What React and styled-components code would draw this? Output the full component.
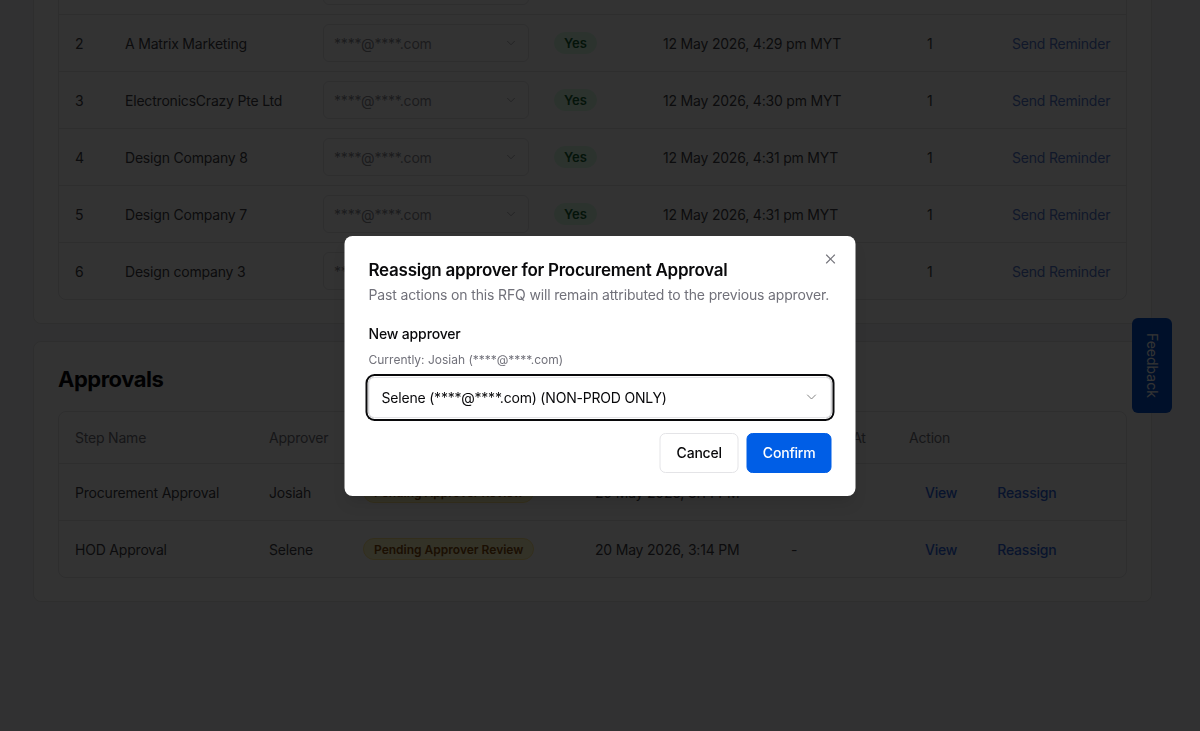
import React from "react"
import styled, { createGlobalStyle } from "styled-components"
import { ChevronDown, X } from "lucide-react"

const GlobalStyle = createGlobalStyle`
  * { box-sizing: border-box; }
  body {
    margin: 0;
    background: #f6f6f7;
    font-family: Inter, "Noto Sans", sans-serif;
    color: #09090b;
    -webkit-font-smoothing: antialiased;
  }
`

// page is scrolled down: the first card starts above the window
const Page = styled.main`
  display: flex;
  flex-direction: column;
  gap: 17px;
  width: 1152px;
  margin-top: -165px;
  padding: 0 0 120px 33px;
`

const Card = styled.section`
  background: #ffffff;
  border: 1px solid #e4e4e7;
  border-radius: 8px;
  padding: 21px 24px 23px;
`

const CardTitle = styled.h2`
  margin: 0 0 16px;
  font-size: 22px;
  line-height: 32px;
  font-weight: 700;
  letter-spacing: -0.5px;
  color: #09090b;
`

const Table = styled.div`
  border: 1px solid #e4e4e7;
  border-radius: 8px;
  overflow: hidden;
`

const Row = styled.div`
  display: grid;
  grid-template-columns: ${p => p.$cols};
  align-items: center;
  height: ${p => (p.$head ? 52 : 57)}px;
  border-bottom: 1px solid #e4e4e7;
  font-size: 14px;
  letter-spacing: -0.2px;
  color: ${p => (p.$head ? "#71717a" : "#3f3f46")};

  &:last-child {
    border-bottom: none;
    height: ${p => (p.$head ? 52 : 56)}px;
  }
`

const Cell = styled.div`
  padding-left: 16px;
  white-space: nowrap;
  display: flex;
  align-items: center;
  gap: 8px;
`

const EmailSelect = styled.div`
  width: 206px;
  height: 38px;
  border: 1px solid #e4e4e7;
  border-radius: 6px;
  display: flex;
  align-items: center;
  justify-content: space-between;
  padding: 0 10px 0 10px;
  color: #8a8a93;
  font-size: 14px;

  svg { color: #a1a1aa; }
`

const Badge = styled.span`
  display: inline-flex;
  align-items: center;
  height: 22px;
  padding: 0 ${p => (p.$tone === "green" ? 9 : 10)}px;
  border-radius: 999px;
  font-weight: 600;
  letter-spacing: 0;
  font-size: ${p => (p.$tone === "green" ? 13 : 12)}px;
  background: ${p => (p.$tone === "green" ? "#dcfce7" : "#fef9c3")};
  color: ${p => (p.$tone === "green" ? "#166534" : "#854d0e")};
  border: 1px solid ${p => (p.$tone === "green" ? "#dcfce7" : "#fde68a")};
`

const LinkText = styled.span`
  color: ${p => (p.$muted ? "#5479cf" : "#2f66de")};
  font-size: 14px;
  font-weight: ${p => (p.$muted ? 400 : 500)};
`

const LinkButton = styled(LinkText)`
  padding: 0 16px;
`

const Feedback = styled.button`
  position: fixed;
  right: 28px;
  top: 318px;
  width: 40px;
  height: 95px;
  border: none;
  border-radius: 6px;
  background: #0050d2;
  color: #ffffff;
  font-family: inherit;
  font-size: 14px;
  writing-mode: vertical-rl;
  display: flex;
  align-items: center;
  justify-content: center;
  padding: 0;
`

const Overlay = styled.div`
  position: fixed;
  inset: 0;
  background: rgba(0, 0, 0, 0.8);
`

const Dialog = styled.div`
  position: fixed;
  left: 50%;
  top: 50%;
  transform: translate(-50%, -50%);
  width: 511px;
  background: #ffffff;
  border-radius: 8px;
  padding: 24px 24px 23px;
  box-shadow: 0 10px 15px -3px rgba(0,0,0,0.1), 0 4px 6px -4px rgba(0,0,0,0.1);
`

const Close = styled.button`
  position: absolute;
  right: 17px;
  top: 15px;
  border: none;
  background: none;
  padding: 0;
  display: flex;
  color: #52525b;
  opacity: 0.8;
`

const DialogTitle = styled.h3`
  margin: 0;
  font-size: 17px;
  line-height: 20px;
  font-weight: 600;
  letter-spacing: -0.25px;
  color: #09090b;
`

const DialogText = styled.p`
  margin: 5px 0 0;
  font-size: 14px;
  line-height: 20px;
  letter-spacing: -0.15px;
  white-space: nowrap;
  color: #71717a;
`

const Field = styled.div`
  margin-top: 19px;
  display: flex;
  flex-direction: column;
`

const Label = styled.label`
  font-size: 14px;
  line-height: 20px;
  font-weight: 500;
  letter-spacing: -0.15px;
  color: #09090b;
`

const Hint = styled.span`
  margin-top: 8px;
  font-size: 12px;
  line-height: 16px;
  color: #71717a;
`

const Select = styled.div`
  margin-top: 9px;
  height: 41px;
  border: 1px solid #e4e4e7;
  border-radius: 6px;
  box-shadow: 0 0 0 1px #ffffff, 0 0 0 3px #09090b;
  display: flex;
  align-items: center;
  justify-content: space-between;
  padding: 0 11px 0 12px;
  font-size: 14px;
  letter-spacing: -0.2px;
  color: #09090b;

  svg { color: #09090b; opacity: 0.5; }
`

const Footer = styled.div`
  margin-top: 15px;
  display: flex;
  justify-content: flex-end;
  gap: 8px;
`

const Button = styled.button`
  height: 40px;
  padding: 0 ${p => (p.$primary ? 15 : 16)}px;
  border-radius: 6px;
  font-family: inherit;
  font-size: 14px;
  font-weight: 500;
  letter-spacing: -0.2px;
  border: 1px solid ${p => (p.$primary ? "#005ee6" : "#e4e4e7")};
  background: ${p => (p.$primary ? "#005ee6" : "#ffffff")};
  color: ${p => (p.$primary ? "#ffffff" : "#09090b")};
`

const supplierCols = "50px 198px 231px 109px 264px 85px 1fr"
const approvalCols = "194px 94px 232px 196px 118px 1fr"

const suppliers = [
  ["1", "Design Company 9", "4:28 pm"],
  ["2", "A Matrix Marketing", "4:29 pm"],
  ["3", "ElectronicsCrazy Pte Ltd", "4:30 pm"],
  ["4", "Design Company 8", "4:31 pm"],
  ["5", "Design Company 7", "4:31 pm"],
  ["6", "Design company 3", "4:32 pm"],
]

const approvals = [
  ["Procurement Approval", "Josiah"],
  ["HOD Approval", "Selene"],
]

export default function App() {
  return (
    <>
      <GlobalStyle />
      <Page>
        <Card>
          <CardTitle>Suppliers</CardTitle>
          <Table>
            <Row $head $cols={supplierCols}>
              <Cell>#</Cell>
              <Cell>Supplier</Cell>
              <Cell>Email</Cell>
              <Cell>Viewed</Cell>
              <Cell>Last Viewed</Cell>
              <Cell>Views</Cell>
              <Cell>Action</Cell>
            </Row>
            {suppliers.map(([no, name, time]) => (
              <Row key={no} $cols={supplierCols}>
                <Cell>{no}</Cell>
                <Cell>{name}</Cell>
                <Cell>
                  <EmailSelect>
                    ****@****.com
                    <ChevronDown size={14} strokeWidth={1.5} />
                  </EmailSelect>
                </Cell>
                <Cell><Badge $tone="green">Yes</Badge></Cell>
                <Cell>12 May 2026, {time} MYT</Cell>
                <Cell>1</Cell>
                <Cell><LinkText $muted>Send Reminder</LinkText></Cell>
              </Row>
            ))}
          </Table>
        </Card>

        <Card>
          <CardTitle>Approvals</CardTitle>
          <Table>
            <Row $head $cols={approvalCols}>
              <Cell>Step Name</Cell>
              <Cell>Approver</Cell>
              <Cell>Status</Cell>
              <Cell>Assigned At</Cell>
              <Cell>Actioned At</Cell>
              <Cell>Action</Cell>
            </Row>
            {approvals.map(([step, who]) => (
              <Row key={step} $cols={approvalCols}>
                <Cell>{step}</Cell>
                <Cell>{who}</Cell>
                <Cell><Badge $tone="yellow">Pending Approver Review</Badge></Cell>
                <Cell>20 May 2026, 3:14 PM</Cell>
                <Cell>-</Cell>
                <Cell>
                  <LinkButton>View</LinkButton>
                  <LinkButton>Reassign</LinkButton>
                </Cell>
              </Row>
            ))}
          </Table>
        </Card>
      </Page>

      <Feedback>Feedback</Feedback>

      <Overlay />
      <Dialog role="dialog">
        <Close aria-label="Close"><X size={16} strokeWidth={1.75} /></Close>
        <DialogTitle>Reassign approver for Procurement Approval</DialogTitle>
        <DialogText>Past actions on this RFQ will remain attributed to the previous approver.</DialogText>
        <Field>
          <Label>New approver</Label>
          <Hint>Currently: Josiah (****@****.com)</Hint>
          <Select>
            Selene (****@****.com) (NON-PROD ONLY)
            <ChevronDown size={16} strokeWidth={1.5} />
          </Select>
        </Field>
        <Footer>
          <Button>Cancel</Button>
          <Button $primary>Confirm</Button>
        </Footer>
      </Dialog>
    </>
  )
}
